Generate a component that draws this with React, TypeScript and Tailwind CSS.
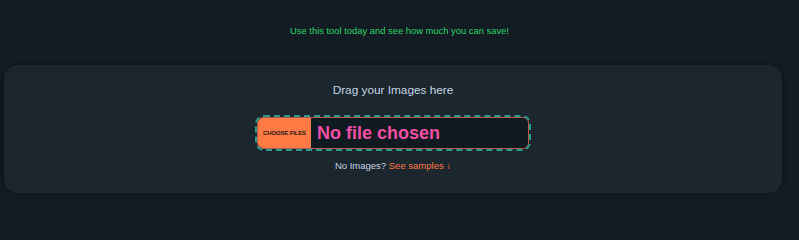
export default function App() {
  return (
    <div className="min-h-screen w-full bg-[#131c22] pt-[25px] font-['Liberation_Sans',Arial,sans-serif]">
      <p className="text-center text-[9.4px] leading-[12px] text-[#2bd46a]">
        Use this tool today and see how much you can save!
      </p>

      <div className="ml-[4px] mr-[17px] mt-[28px] flex h-[128px] flex-col items-center rounded-[14px] bg-[#1b262e] pt-[17px] shadow-[0_0_6px_rgba(0,0,0,0.35)]">
        <p className="text-[11.8px] leading-[16px] text-[#c6d5e3]">Drag your Images here</p>

        <div className="mt-[19px] rounded-[7px] outline-2 outline-dashed outline-[#2a9d8f]">
          <div className="flex h-[32px] w-[272px] overflow-hidden rounded-[6px] border border-[#b5584c] bg-[#111a20]">
            <span className="flex w-[53px] items-center justify-center bg-[#ff7a45] text-[6px] font-bold tracking-tight text-[#2a1a14]">
              CHOOSE FILES
            </span>
            <span className="flex items-center pl-[6px] text-[18px] font-bold text-[#ef4fa6]">No file chosen</span>
          </div>
        </div>

        <p className="mt-[10px] text-[9.5px] leading-[14px] text-[#c6d5e3]">
          No Images? <span className="text-[#ff7a45]">See samples ↓</span>
        </p>
      </div>
    </div>
  );
}
